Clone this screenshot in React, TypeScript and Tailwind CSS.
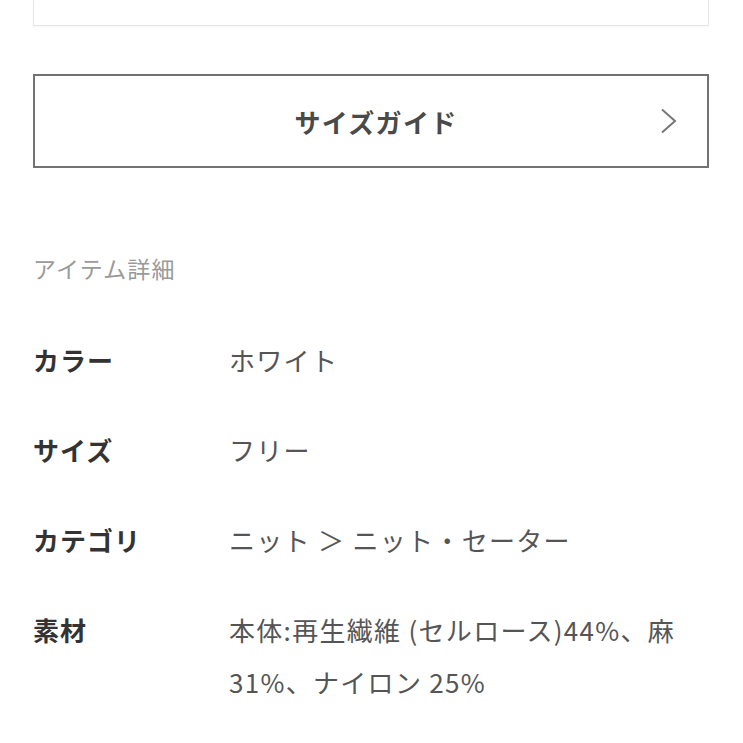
const rows = [
  { label: "カラー", value: ["ホワイト"] },
  { label: "サイズ", value: ["フリー"] },
  { label: "カテゴリ", value: ["ニット ＞ ニット・セーター"] },
  { label: "素材", value: ["本体:再生繊維 (セルロース)44%、麻", "31%、ナイロン 25%"] },
]

const App = () => {
  return (
    <div
      className="min-h-screen bg-white px-[33px] text-[#333]"
      style={{ fontFamily: '"Noto Sans CJK JP", "Noto Sans", sans-serif' }}
    >
      <div className="h-[26px] w-[676px] border border-t-0 border-[#e6e6e6] shadow-[0_1px_2px_rgba(0,0,0,0.04)]" />

      <button className="mt-[48px] flex h-[94px] w-[676px] items-center justify-center border-2 border-[#727272] pl-[10px] relative">
        <span className="text-[26px] font-bold text-[#4a4a4a] tracking-[0.05em]">サイズガイド</span>
        <svg
          className="absolute right-[30px] top-1/2 -translate-y-1/2"
          width="17"
          height="26"
          viewBox="0 0 17 26"
          fill="none"
          stroke="#777"
          strokeWidth="2"
        >
          <path d="M2 1.5 L15 13 L2 24.5" />
        </svg>
      </button>

      <h3 className="mt-[84px] text-[23px] leading-[32px] tracking-[0.05em] text-[#9a9a9a]">アイテム詳細</h3>

      <dl className="mt-[50px] flex flex-col gap-[38px]">
        {rows.map((row) => (
          <div key={row.label} className="flex">
            <dt className="w-[196px] shrink-0 text-[26px] font-bold leading-[52px] tracking-[0.04em] text-[#333]">
              {row.label}
            </dt>
            <dd className="text-[26px] leading-[52px] tracking-[0.05em] text-[#555]">
              {row.value.map((line) => (
                <div key={line}>{line}</div>
              ))}
            </dd>
          </div>
        ))}
      </dl>
    </div>
  )
}

export default App
